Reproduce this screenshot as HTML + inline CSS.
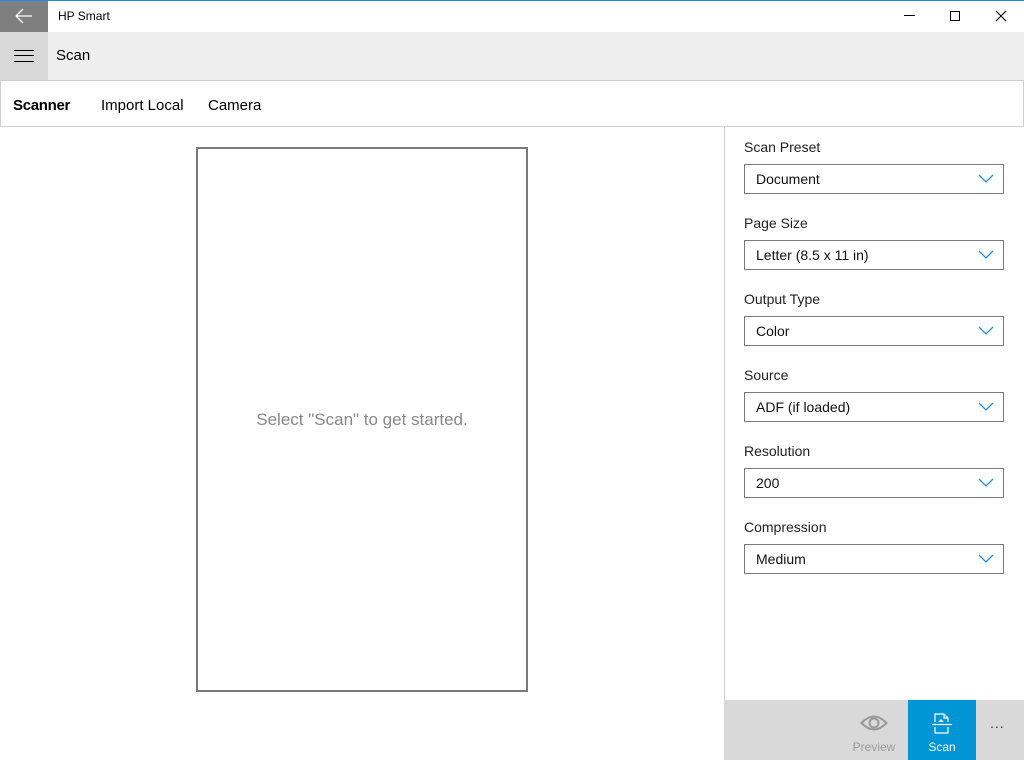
<!DOCTYPE html>
<html><head><style>
*{box-sizing:border-box;margin:0;padding:0}
body{width:1024px;height:760px;overflow:hidden;background:#fff;font-family:"Liberation Sans",sans-serif;position:relative;color:#000}
.abs{position:absolute}
.lbl{position:absolute;left:744px;font-size:14px;color:#222}
.dd{position:absolute;left:744px;width:260px;height:30px;border:1px solid #7a7a7a;font-size:14px;padding-left:11px;line-height:28px;color:#111}
.dd svg{position:absolute;right:9px;top:9px}
</style></head><body>
<div class="abs" style="left:0;top:0;width:1024px;height:1px;background:#1e88e5"></div>
<div class="abs" style="left:0;top:1px;width:48px;height:31px;background:#7f7f7f"></div>
<svg class="abs" style="left:14px;top:8px" width="20" height="16"><path d="M2 8H18M2 8L9 1M2 8L9 15" stroke="#fff" stroke-width="1.3" fill="none"/></svg>
<div class="abs" style="left:58px;top:9px;font-size:12px">HP Smart</div>
<div class="abs" style="left:904px;top:15px;width:11px;height:1px;background:#000"></div>
<div class="abs" style="left:950px;top:11px;width:10px;height:10px;border:1px solid #000"></div>
<svg class="abs" style="left:995px;top:10px" width="12" height="12"><path d="M1 1L11 11M11 1L1 11" stroke="#000" stroke-width="1"/></svg>
<div class="abs" style="left:0;top:32px;width:1024px;height:48px;background:#eee"></div>
<div class="abs" style="left:0;top:32px;width:48px;height:48px;background:#d9d9d9"></div>
<div class="abs" style="left:14px;top:50px;width:20px;height:1px;background:#000"></div>
<div class="abs" style="left:14px;top:55px;width:20px;height:1px;background:#000"></div>
<div class="abs" style="left:14px;top:61px;width:20px;height:1px;background:#000"></div>
<div class="abs" style="left:56px;top:47px;font-size:15px">Scan</div>
<div class="abs" style="left:0;top:80px;width:1024px;height:47px;border:1px solid #d0d0d0"></div>
<div class="abs" style="left:13px;top:97px;font-size:15px;font-weight:bold;letter-spacing:-0.3px">Scanner</div>
<div class="abs" style="left:101px;top:97px;font-size:15px">Import Local</div>
<div class="abs" style="left:208px;top:97px;font-size:15px">Camera</div>
<div class="abs" style="left:196px;top:147px;width:332px;height:545px;border:2px solid #7a7a7a"></div>
<div class="abs" style="left:196px;top:410px;width:332px;text-align:center;font-size:17px;color:#888">Select "Scan" to get started.</div>
<div class="abs" style="left:724px;top:127px;width:300px;height:633px;border-left:1px solid #d0d0d0"></div>
<div class="lbl" style="top:139px">Scan Preset</div>
<div class="dd" style="top:164px">Document<svg width="16" height="10"><path d="M1 1L8 8L15 1" stroke="#1e90d8" stroke-width="1.3" fill="none"/></svg></div>
<div class="lbl" style="top:215px">Page Size</div>
<div class="dd" style="top:240px">Letter (8.5 x 11 in)<svg width="16" height="10"><path d="M1 1L8 8L15 1" stroke="#1e90d8" stroke-width="1.3" fill="none"/></svg></div>
<div class="lbl" style="top:291px">Output Type</div>
<div class="dd" style="top:316px">Color<svg width="16" height="10"><path d="M1 1L8 8L15 1" stroke="#1e90d8" stroke-width="1.3" fill="none"/></svg></div>
<div class="lbl" style="top:367px">Source</div>
<div class="dd" style="top:392px">ADF (if loaded)<svg width="16" height="10"><path d="M1 1L8 8L15 1" stroke="#1e90d8" stroke-width="1.3" fill="none"/></svg></div>
<div class="lbl" style="top:443px">Resolution</div>
<div class="dd" style="top:468px">200<svg width="16" height="10"><path d="M1 1L8 8L15 1" stroke="#1e90d8" stroke-width="1.3" fill="none"/></svg></div>
<div class="lbl" style="top:519px">Compression</div>
<div class="dd" style="top:544px">Medium<svg width="16" height="10"><path d="M1 1L8 8L15 1" stroke="#1e90d8" stroke-width="1.3" fill="none"/></svg></div>
<div class="abs" style="left:724px;top:700px;width:300px;height:60px;background:#d9d9d9"></div>
<svg class="abs" style="left:860px;top:713px" width="28" height="20"><path d="M1.5 10Q14 -3 26.5 10Q14 23 1.5 10Z" stroke="#999" stroke-width="2" fill="none"/><circle cx="14" cy="10" r="4.5" stroke="#999" stroke-width="2" fill="none"/></svg>
<div class="abs" style="left:840px;top:740px;width:68px;text-align:center;font-size:12px;color:#999">Preview</div>
<div class="abs" style="left:908px;top:700px;width:68px;height:60px;background:#0096d6"></div>
<svg class="abs" style="left:931px;top:713px" width="22" height="22"><path d="M4 9V1H13L17 5V9M13 1V5H17M4 14V20H17V14" stroke="#fff" stroke-width="1.2" fill="none"/><path d="M1 11.5H21" stroke="#fff" stroke-width="1.2"/><path d="M7 9L10 6L13 9Z" fill="#fff"/></svg>
<div class="abs" style="left:908px;top:740px;width:68px;text-align:center;font-size:12px;color:#fff">Scan</div>
<div class="abs" style="left:990px;top:715px;font-size:14px;color:#333;letter-spacing:1px">...</div>
</body></html>
